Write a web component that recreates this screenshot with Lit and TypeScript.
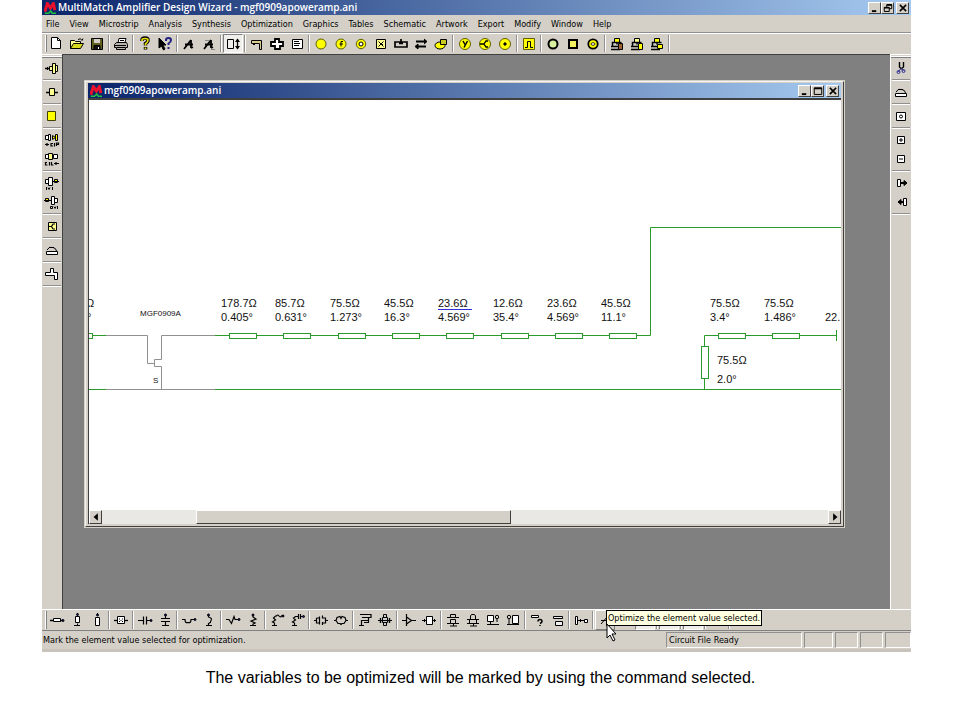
import { LitElement, html, svg, css, nothing } from "lit";
import { customElement, property } from "lit/decorators.js";

const Y = "#ffff00";
const P = "#ffff90";

/* 16 x 16 glyphs, black one-pixel strokes unless a shape says otherwise */
const glyphs: Record<string, unknown> = {
  logo: svg`<path d="M1 13 4.500 2l4 6 4-6 2 9" fill="none" stroke="#e8102c" stroke-width="4"/><path d="M1 15h5l3-3 2 3h5" fill="none" stroke="#20c040" stroke-width="2"/>`,
  new: svg`<path d="M2.500 1.500h6l3 3v8h-9z" fill="#fff"/><path d="M8.500 1.500v3h3"/>`,
  open: svg`<path d="M1.500 12.500v-8h4l1 1h5v3" fill="${P}"/><path d="M1.500 12.500l3-5h10l-3 5z" fill="#d8d820"/><path d="M9 3.500q3-2 4 1l1-2"/>`,
  save: svg`<path d="M2.500 2.500h11v11h-11z" fill="#606020"/><path d="M5 3h6v4H5z" fill="#d4d0c8" stroke="none"/><path d="M5 9.500h6v4H5z" fill="#111"/><path d="M9.500 11v2" stroke="#fff"/>`,
  print: svg`<path d="M5 6.500l1-4h7l-1 4z" fill="#fff"/><path d="M7 4.500h4"/><path d="M1.500 8.500l2-2h10l1 2v3h-2v2h-9v-2h-2z" fill="#b8b4ac"/><path d="M2 9.500h11M4 11.500h8"/>`,
  help: svg`<path d="M5 5V4q0-2 3-2t3 2q0 2-2.500 3.500V9.500M8.500 11v2.500" stroke-width="3.500"/><path d="M5 5V4q0-1.500 3-1.500T11 4q0 2-2.500 4v1.500M8.500 11.500v1.500" stroke="#e8e000" stroke-width="1.700"/>`,
  what: svg`<path d="M2 2v10l2.500-2 2 4 1.500-1-2-4h3z" fill="#000"/><path d="M9 5V4q0-2 2.500-2T14 4q0 2-2.500 3.500V9M11.500 11v2" stroke="#202080" stroke-width="2"/>`,
  a1: svg`<path d="M3 13l7-9M10 4v8M4 8.500h8M10 12l2-1" stroke-width="1.800"/>`,
  a2: svg`<path d="M3 13l7-9M10 4v8M4 8.500h8M10 12l2-1" stroke-width="1.800"/><path d="M4 4.500h4M10 13.500h4" stroke="#888"/>`,
  size: svg`<path d="M2.500 3.500h6v9h-6z"/><path d="M12.500 3v10" stroke-width="1.300"/><path d="M10 6l2.500-3.500L15 6zM10 10l2.500 3.500L15 10z" fill="#000" stroke="none"/>`,
  strip: svg`<path d="M2.500 4.500h10v9h-2v-6h-8z" fill="#d8cc90"/><path d="M4 8.500h2"/>`,
  cross: svg`<path d="M6 3h4v3h4v4h-3v3H6v-3H2V6h4z" fill="#fff" stroke-width="1.800"/>`,
  note: svg`<path d="M3.500 3.500h10v9h-10z" fill="#fff"/><path d="M5 5.500h5M5 7.500h6M5 9.500h5"/>`,
  circ: svg`<circle cx="8" cy="8" r="5" fill="${Y}" stroke="#606000"/>`,
  circf: svg`<circle cx="8" cy="8" r="5" fill="${Y}" stroke="#606000"/><path d="M10 5.500H8v5M6.500 8H10"/>`,
  ring: svg`<circle cx="8" cy="8" r="4.700" fill="${Y}" stroke="#606000"/><circle cx="8" cy="8" r="2" fill="#fff"/>`,
  boxx: svg`<path d="M3.500 3.500h9v9h-9z" fill="${P}"/><path d="M5.500 5.500l5 5M10.500 5.500l-5 5M7 8.500h3"/>`,
  feed: svg`<path d="M2 6h12v5H2zM8 3v5M6 7.500h4" stroke-width="1.700"/>`,
  swap: svg`<path d="M3 5.500h9M4 10.500h9" stroke-width="2"/><path d="M11 3l3 2.500L11 8M5 8l-3 2.500L5 13z" fill="#000"/>`,
  stack: svg`<ellipse cx="7" cy="9.500" rx="5" ry="3.500" fill="${Y}"/><path d="M7.500 3.500h6v5h-6z" fill="#c8c820"/>`,
  cy: svg`<circle cx="8" cy="8" r="5.500" fill="${Y}" stroke="#606000"/><path d="M6 5l2 3.500M10.500 5L7 11.500" stroke-width="1.500"/>`,
  ck: svg`<circle cx="8" cy="8" r="5.500" fill="${Y}" stroke="#606000"/><path d="M3 8h4M11 5H9L7 8l2 3h2" stroke-width="1.300"/>`,
  cdot: svg`<circle cx="8" cy="8" r="5.500" fill="${Y}" stroke="#606000"/><circle cx="8" cy="8" r="1.200" fill="#000"/>`,
  pulse: svg`<path d="M2.500 2.500h11v11h-11z" fill="${Y}" stroke="#606000"/><path d="M4 11.500h2.500v-6h3v6H12"/>`,
  oc: svg`<circle cx="8" cy="8" r="4.500" fill="#d8f0a0" stroke-width="2"/>`,
  os: svg`<path d="M4 4h8v8H4z" fill="#f0f060" stroke-width="2"/>`,
  oe: svg`<circle cx="8" cy="8" r="4.700" fill="${Y}" stroke-width="1.800"/><ellipse cx="8" cy="8" rx="2" ry="1.300" fill="#fff" stroke-width=".8"/>`,
  net1: svg`<path d="M5.500 2.500h5v4h-5z" fill="${Y}"/><path d="M8 6.500v2M3.500 10V6.500h9M2 10.500h7M2 13.500h9" stroke-width="1.500"/><path d="M9.500 7.500h4v6h-4z" fill="#a06030"/>`,
  net2: svg`<path d="M5.500 2.500h5v4h-5z" fill="${P}"/><path d="M8 6.500v2M3.500 10V6.500h9M2 10.500h7M2 13.500h9" stroke-width="1.500"/><path d="M9.500 7.500h4v6h-4z" fill="${Y}"/>`,
  net3: svg`<path d="M5.500 2.500h5v4h-5z" fill="${Y}"/><path d="M8 6.500v2M3.500 10V6.500h9M2 10.500h7M2 13.500h9" stroke-width="1.500"/><path d="M8.500 8.500h5v4h-5z" fill="${Y}"/>`,

  amp: svg`<path d="M1 8.500h4" stroke-width="1.500"/><path d="M5.500 6.500h3v4h-3zM8.500 3.500h3v10h-3zM11.500 5.500h2v6h-2z" fill="${P}"/><path d="M3.500 7v3"/>`,
  blk: svg`<path d="M2 8.500h12" stroke-width="1.500"/><path d="M5.500 4.500h5v7h-5z" fill="${P}"/>`,
  sq: svg`<path d="M3.500 3.500h8v9h-8z" fill="${Y}" stroke="#404000"/>`,
  cir: svg`<path d="M1.500 3.500h3v4h-3zM4.500 2.500h2v6h-2z" fill="#fff"/><path d="M8.500 3.500l3 2-3 2zM11.500 2.500h2v6h-2z" fill="${Y}"/><path d="M1 12.500h4M3 11v3M7 11.500h2M7 11v3h2M10.500 11v3.500M12.500 14v-3h2v1.500h-2" stroke-width="1.200"/>`,
  cil: svg`<path d="M1.500 3.500h3v4h-3zM9.500 3.500h4v4h-4z" fill="#fff"/><path d="M4.500 2.500h4v6h-4z" fill="${P}"/><path d="M1.500 11v3h2M1 11.500h2M5.500 11v3.500M7.500 11v3h2M10 12.500h5M12 11v3" stroke-width="1.200"/>`,
  ivi: svg`<path d="M1.500 4.500h3v4h-3zM4.500 2.500h4v8h-4z" fill="#fff"/><path d="M10.500 4.500h3v3h-3z" fill="${Y}"/><path d="M8 6.500h7M2.500 12v3M4 12.500l1 2 1-2M8.500 12v3"/>`,
  oni: svg`<path d="M1.500 4.500h3v3h-3z" fill="${Y}"/><path d="M7.500 2.500h3v8h-3zM10.500 4.500h3v4h-3z" fill="#fff"/><path d="M0 6.500h7M6.500 12.500h2v2h-2zM10 12.500l1 2 1-2M13.500 12v3"/>`,
  kbox: svg`<path d="M4.500 4.500h8v8h-8z" fill="${P}"/><path d="M4 8.500h3M11 6H9L7.500 8.500 9 11h2" stroke-width="1.200"/>`,
  lid: svg`<path d="M2.500 9.500h11v3h-11z" fill="#fff"/><path d="M3 8q2-4 6-2.500Q12 6 12.500 9M5 5.500h5"/>`,
  plus: svg`<path d="M6.500 2.500h3v4h4v7h-3v-4h-9v-3h5z" fill="#fff"/>`,
  cut: svg`<path d="M6.500 2v5l2 2M10.500 2v5L8 9" stroke-width="1.400"/><path d="M8 8.500L5 12M8 8.500l3 2" stroke="#303090"/><circle cx="5.500" cy="12" r="1.500" stroke="#303090"/><circle cx="10.500" cy="11" r="1.500" stroke="#303090"/>`,
  view: svg`<path d="M3.500 4.500h9v8h-9z" fill="#fff"/><circle cx="8" cy="8.500" r="1.500"/>`,
  zin: svg`<path d="M4.500 4.500h7v7h-7z" fill="#fff"/><path d="M6 8h4M8 6v4"/>`,
  zout: svg`<path d="M4.500 4.500h7v7h-7z" fill="#fff"/><path d="M6 8h4"/>`,
  right: svg`<path d="M4.500 4.500h3v7h-3z" fill="#fff"/><path d="M8 8h5" stroke-width="2"/><path d="M11 5.500L14 8l-3 2.500z" fill="#000"/>`,
  left: svg`<path d="M10.500 4.500h3v7h-3z" fill="#fff"/><path d="M5 8h5" stroke-width="2"/><path d="M8 5.500L5 8l3 2.500z" fill="#000"/>`,

  res: svg`<path d="M1 8.500h3M11 8.500h3" stroke-width="1.300"/><path d="M4.500 6.500h7v3h-7z" fill="#fff"/><circle cx="14" cy="8.500" r="1" fill="#202080"/>`,
  resg: svg`<path d="M8.500 1v3M8.500 11.500v2M5 13.500h6"/><path d="M6.500 4.500h4v6h-4z" fill="#fff"/><circle cx="8.500" cy="2.500" r="1" fill="#202080"/>`,
  reso: svg`<path d="M8.500 1v3"/><path d="M6.500 5.500h4v8h-4z" fill="#fff"/><circle cx="8.500" cy="3" r="1" fill="#202080"/>`,
  quad: svg`<path d="M1 8.500h14" stroke-width="1.300"/><path d="M4.500 4.500h7v7h-7z" fill="#fff"/><path d="M6 7h1M9 7h1M6 9.500h1M9 9.500h1M7.500 8.500h1"/>`,
  cap: svg`<path d="M1 8.500h5M6.500 4.500v8M9.500 4.500v8M10 8.500h5" stroke-width="1.200"/><circle cx="14" cy="8.500" r="1" fill="#202080"/>`,
  capg: svg`<path d="M8.500 2v4M4 6.500h9M4 9.500h9M8.500 10v3M5 13.500h7" stroke-width="1.200"/><circle cx="8.500" cy="3" r="1" fill="#202080"/>`,
  ind: svg`<path d="M1 7.500h3q0 4 3 3 3 1 3-3h4" stroke-width="1.200"/><circle cx="14" cy="7.500" r="1" fill="#202080"/>`,
  indg: svg`<path d="M7.500 2v3q4 1 2.500 3.500 0 2-2.500 3v2M5 13.500h6" stroke-width="1.200"/><circle cx="7.500" cy="3" r="1" fill="#202080"/>`,
  rz: svg`<path d="M1 7.500h3l2.500 4 2.500-7 1 3h4" stroke-width="1.200"/><circle cx="14" cy="7.500" r="1" fill="#202080"/>`,
  rzg: svg`<path d="M8 2v3l3 2-5 2 4 2-2 1v2M5 13.500h6" stroke-width="1.200"/><circle cx="8" cy="3" r="1" fill="#202080"/>`,
  par1: svg`<path d="M3 13.500h5M5.500 13v-2l-2-1 3-2-2-2 2-2h1q1-2 2.500 0 1.500 2 3-.5h2" stroke-width="1.200"/><circle cx="14" cy="4" r="1" fill="#202080"/>`,
  par2: svg`<path d="M3 13.500h5M5.500 13v-2l-2-1 3-2-2-2 2-1.500H9M9.500 2v5M11.500 2v5M12 4.500h3" stroke-width="1.200"/><circle cx="14.500" cy="4.500" r="1" fill="#202080"/>`,
  ser1: svg`<path d="M1 8.500h2M13 8.500h2M3.500 6v5h3M6.500 4.500v8M9.500 3.500v3M9.500 10v3M3.500 6h3M9.500 6h3v5h-3" stroke-width="1.200"/>`,
  ser2: svg`<path d="M1 8.500h2l1-3 3-1 1 2 1-2 3 1 1 3h2M3 8.500l2 3h2l1 1 1-1h2l2-3" stroke-width="1.200"/>`,
  cpl: svg`<path d="M3 2.500h11v3H5M5.500 8.500h6v-3M2 13.500h5M4.500 13V8.500h7v2H7" stroke-width="1.200"/>`,
  trf: svg`<path d="M1 8.500h14M5.500 5.500h5v5h-5zM6.500 2.500h3v3h-3zM6.500 10.500h3v3h-3z" fill="#ccc"/><path d="M3.500 6v5M12.500 6v5" stroke-width="1.400"/>`,
  tri: svg`<path d="M1 8.500h4M5.500 2v12M5.500 5l5 3.500-5 3.500M10 8.500h5" stroke-width="1.200"/>`,
  two: svg`<path d="M1 8.500h14"/><path d="M5.500 4.500h6v8h-6z" fill="#fff"/><path d="M3.500 7v3M13.500 7v3"/>`,
  st1: svg`<path d="M2 5.500h12M2 11.500h12M8.500 11v3M5 14h7"/><path d="M5.500 2.500h5v3h-5zM5.500 7.500h5v4h-5z" fill="#d4d0c8"/>`,
  st2: svg`<path d="M5.500 7v-3l1-1.500h3l1 1.500v3M8.500 11v3M5 14h7"/><path d="M2 7.500h12M2 11.500h12M4.500 7.500h7v4h-7z" fill="#d4d0c8"/>`,
  st3: svg`<path d="M2.500 3.500h6v6h-6z" fill="#fff"/><circle cx="12" cy="5" r="1.700"/><path d="M2 12.500h12M5.500 10v2M12 7v3"/>`,
  st4: svg`<path d="M7.500 3.500h6v8h-6z" fill="#fff"/><circle cx="4" cy="5" r="1.700"/><path d="M2 12.500h12M4 7v5"/>`,
  ask: svg`<path d="M2.500 3.500h7v2h-7z" fill="#fff"/><path d="M9 9.500q0-2 2-2t2 2q0 1-2 2M11 13v1" stroke-width="1.500"/>`,
  stp: svg`<path d="M4.500 4.500h9v2h-9zM6.500 9.500h7v4h-7z" fill="#eee"/>`,
  link: svg`<path d="M2.500 4.500h2v8h-2zM5 8.500h6M11.500 7.500h3v3h-3z" fill="#fff"/><path d="M7.500 7v3"/>`,
  opt: svg`<path d="M4 12l7-8M11 4v8M4 8.500h9"/>`,
  tune: svg`<path d="M6 12.500h5M8 12v2"/>`,

  min: svg`<path d="M3 13h7" stroke-width="3"/>`,
  max: svg`<path d="M2 3h12v10.500H2z" stroke-width="1.600"/><path d="M2 4h12" stroke-width="2.500"/>`,
  restore: svg`<path d="M6 7V3h8v6h-4M2 7h8v6.500H2z" stroke-width="1.600"/><path d="M6 3h8M2 7.500h8" stroke-width="2.500"/>`,
  close: svg`<path d="M3 3l10 10M13 3L3 13" stroke-width="2.500"/>`,
  sl: svg`<path d="M11 2v12L4 8z" fill="#000" stroke="none"/>`,
  sr: svg`<path d="M5 2v12l7-6z" fill="#000" stroke="none"/>`,
};

const icon = (name: string) =>
  html`<svg class="icon" viewBox="0 0 16 16" aria-hidden="true" fill="none" stroke="#000">${glyphs[name]}</svg>`;

const base = css`
  * { box-sizing: border-box; }
  button { font: inherit; color: inherit; margin: 0; padding: 0; border: 0; background: none; }
  .icon { display: block; width: 16px; height: 16px; flex: none; }
`;

@customElement("tool-strip")
class ToolStrip extends LitElement {
  @property({ attribute: false }) groups: string[][] = [];
  @property({ type: Boolean, reflect: true }) vertical = false;
  @property() pressed = "";
  @property() hot = "";

  static styles = [base, css`
    :host { display: flex; align-items: stretch; background: #d4d0c8; padding-left: 3px; border-top: 1px solid #fff; border-bottom: 1px solid #808080; }
    .grip { width: 2px; flex: none; border-right: 1px solid #808080; border-left: 1px solid #fff; margin: 1px 0; }
    .group { display: flex; }
    .tool { width: 20px; display: grid; place-items: center; }
    .sep { width: 4px; flex: none; background: linear-gradient(90deg, transparent 1px, #909090 1px 2px, #fff 2px 3px, transparent 3px); margin: 1px 0; }
    .pressed { background: #f0eeea; border: 1px solid #808080; border-right-color: #fff; border-bottom-color: #fff; }
    .hot { border: 1px solid #fff; border-right-color: #808080; border-bottom-color: #808080; }
    :host([vertical]) { flex-direction: column; padding: 1px 0 0; border-top: 1px solid #fff; border-bottom: 0; }
    :host([vertical]) .grip { width: auto; height: 2px; border: 0; border-top: 1px solid #fff; border-bottom: 1px solid #808080; margin: 0; }
    :host([vertical]) .group { flex-direction: column; align-items: center; }
    :host([vertical]) .tool { height: 19px; }
    :host([vertical]) .sep { width: auto; height: 5px; margin: 0 1px; background: linear-gradient(transparent 2px, #909090 2px 3px, #fff 3px 4px, transparent 4px); }
  `];

  render() {
    return html`<span class="grip"></span>${this.groups.map((g) => html`
      <div class="group">${g.map((n) => html`
        <button class="tool ${n === this.pressed ? "pressed" : ""} ${n === this.hot ? "hot" : ""}" aria-label=${n || "tool"}>
          ${n ? icon(n) : nothing}
        </button>`)}</div>
      <span class="sep"></span>`)}`;
  }
}

@customElement("circuit-view")
class CircuitView extends LitElement {
  static styles = css`
    :host { display: block; flex: 1; min-height: 0; background: #fff; overflow: hidden; }
    .sheet { display: block; width: 100%; height: 100%; }
    .wire { stroke: #2a9a2a; fill: none; }
    .part { stroke: #2a9a2a; fill: #fff; }
    .device { stroke: #909090; fill: none; }
    .mark { stroke: #3030d8; fill: none; }
    .value { font: 11px "Liberation Sans", Arial, sans-serif; fill: #111; }
    .name { font: 8px "Liberation Sans", Arial, sans-serif; fill: #111; }
  `;

  private lines: [number, string, string][] = [
    [132, "178.7Ω", "0.405°"], [186, "85.7Ω", "0.631°"], [241, "75.5Ω", "1.273°"], [295, "45.5Ω", "16.3°"],
    [349, "23.6Ω", "4.569°"], [404, "12.6Ω", "35.4°"], [458, "23.6Ω", "4.569°"], [512, "45.5Ω", "11.1°"],
    [621, "75.5Ω", "3.4°"], [675, "75.5Ω", "1.486°"],
  ];

  render() {
    return html`<svg class="sheet" role="img" aria-label="Amplifier circuit">
      <path class="device" d="M17 235.500H58.500V263.500H65.500M72.500 289V266.500H65.500V259.500H72.500V235.500H126M17 289.500H126"/>
      <path class="wire" d="M0 235.500H17M0 289.500H17M126 289.500H2000M126 235.500H561.500V127.500H2000M615.500 289V235.500H747M747.500 230V241"/>
      <rect class="part" x="-22.500" y="233.500" width="26" height="5"/>
      ${this.lines.map(([x, z, len]) => svg`
        <rect class="part" x=${x + 8.5} y="233.500" width="27" height="5"/>
        <text class="value" x=${x} y="207">${z}</text>
        <text class="value" x=${x} y="221">${len}</text>`)}
      <path class="mark" d="M349 209.500h34"/>
      <rect class="part" x="612.500" y="246.500" width="7" height="32"/>
      <text class="value" x="628" y="264">75.5Ω</text>
      <text class="value" x="628" y="283">2.0°</text>
      <text class="value" x="736" y="221">22.</text>
      <text class="value" x="-3" y="207">Ω</text>
      <text class="value" x="-2" y="221">°</text>
      <text class="name" x="51" y="216">MGF0909A</text>
      <text class="name" x="64" y="283">S</text>
    </svg>`;
  }
}

@customElement("app-root")
class AppRoot extends LitElement {
  static styles = [base, css`
    :host { display: flex; flex-direction: column; min-height: 100vh; background: #fff; color: #000; font: 9px/12px "DejaVu Sans Condensed", "DejaVu Sans", sans-serif; }
    .frame { flex: 1; display: flex; flex-direction: column; margin: 0 49px 0 42px; background: #d4d0c8; }
    .title { display: flex; align-items: center; gap: 2px; height: 15px; flex: none; padding: 0 2px 0 2px; color: #fff; background: linear-gradient(90deg, #0a246a, #a6caf0); }
    .title .icon { width: 12px; height: 12px; }
    .caption { flex: 1; font: 600 10px/15px "Open Sans", "Noto Sans", sans-serif; white-space: nowrap; }
    .ctl { width: 13px; height: 12px; display: grid; place-items: center; background: #d4d0c8; border: 1px solid #fff; border-right-color: #404040; border-bottom-color: #404040; }
    .ctl .icon { width: 10px; height: 10px; }
    .ctls { display: flex; }
    .ctls .ctl:last-child { margin-left: 2px; }
    .menu { display: flex; gap: 10px; height: 18px; flex: none; padding: 0 4px; align-items: center; border-bottom: 1px solid #909090; }
    .main { height: 21px; flex: none; border-bottom-color: #d4d0c8; }
    .body { flex: 1; display: flex; min-height: 0; }
    .side { width: 20px; flex: none; }
    .right { width: 21px; border-left: 1px solid #fff; }
    .desk { flex: 1; min-width: 0; display: flex; background: #808080; border: 1px solid #404040; border-width: 1px 0 0 1px; padding: 26px 46px 82px 22px; }
    .child { flex: 1; min-width: 0; display: flex; flex-direction: column; background: #d4d0c8; border: 1px solid #f4f4f0; border-right-color: #404040; border-bottom-color: #404040; box-shadow: 0 0 0 1px #d4d0c8; padding: 1px 2px 2px; }
    .client { flex: 1; min-height: 0; display: flex; flex-direction: column; border: 1px solid #404040; border-width: 2px 0 0 1px; }
    .scroll { display: flex; height: 14px; flex: none; background: #eae8e4; }
    .track { flex: 1; display: grid; grid-template-columns: 94fr 314fr 316fr; }
    .thumb { grid-column: 2; background: #d4d0c8; border: 1px solid #fff; border-right-color: #404040; border-bottom-color: #404040; }
    .scroll .ctl { height: 14px; }
    .bottom { position: relative; display: flex; flex: none; height: 22px; }
    .tools { flex: 1; }
    .tip { position: absolute; left: 564px; top: 1px; height: 16px; padding: 0 1px; background: #ffffe1; border: 1px solid #000; line-height: 14px; white-space: nowrap; }
    .pointer { position: absolute; left: 564px; top: 14px; width: 12px; height: 20px; z-index: 1; }
    .status { display: flex; gap: 2px; height: 21px; flex: none; padding: 1px 0 1px 1px; border-bottom: 3px solid #c8c4bc; line-height: 16px; }
    .msg { flex: 1; }
    .pane { border: 1px solid #909090; border-right-color: #fff; border-bottom-color: #fff; padding-left: 2px; line-height: 14px; }
    .wide { width: 136px; }
    .p1 { width: 29px; }
    .p2 { width: 23px; }
    .p3 { width: 26px; }
    .note { flex: none; height: 68px; margin: 0; padding: 16px 0 0 1px; text-align: center; font: 16px/20px "Liberation Sans", Arial, sans-serif; }
  `];

  private menus = ["File", "View", "Microstrip", "Analysis", "Synthesis", "Optimization", "Graphics", "Tables", "Schematic", "Artwork", "Export", "Modify", "Window", "Help"];
  private main = [["new", "open", "save"], ["print"], ["help", "what"], ["a1", "a2"], ["size"], ["strip", "cross", "note"],
    ["circ", "circf", "ring", "boxx", "feed", "swap", "stack"], ["cy", "ck", "cdot"], ["pulse"], ["oc", "os", "oe"], ["net1", "net2", "net3"]];
  private leftTools = [["amp"], ["blk"], ["sq"], ["cir", "cil"], ["ivi", "oni"], ["kbox"], ["lid"], ["plus"]];
  private rightTools = [["cut"], ["lid"], ["view"], ["zin", "zout"], ["right", "left"]];
  private parts = [["res", "resg", "reso"], ["quad"], ["cap", "capg"], ["ind", "indg"], ["rz", "rzg"], ["par1", "par2"], ["ser1", "ser2"],
    ["cpl", "trf"], ["tri", "two"], ["st1", "st2", "st3", "st4"], ["ask", "stp"], ["link"], ["opt", "tune", ""], [""], [""], ["tune"]];

  private controls(middle: string) {
    return html`<div class="ctls">
      <button class="ctl" aria-label="Minimize">${icon("min")}</button>
      <button class="ctl" aria-label="Resize">${icon(middle)}</button>
      <button class="ctl" aria-label="Close">${icon("close")}</button>
    </div>`;
  }

  render() {
    return html`
      <div class="frame">
        <header class="title">${icon("logo")}<span class="caption">MultiMatch Amplifier Design Wizard - mgf0909apoweramp.ani</span>${this.controls("restore")}</header>
        <nav class="menu">${this.menus.map((m) => html`<button>${m}</button>`)}</nav>
        <tool-strip class="main" .groups=${this.main} pressed="size"></tool-strip>
        <div class="body">
          <tool-strip class="side" vertical .groups=${this.leftTools}></tool-strip>
          <main class="desk">
            <section class="child">
              <div class="title">${icon("logo")}<span class="caption">mgf0909apoweramp.ani</span>${this.controls("max")}</div>
              <div class="client">
                <circuit-view></circuit-view>
                <div class="scroll">
                  <button class="ctl" aria-label="Scroll left">${icon("sl")}</button>
                  <div class="track"><div class="thumb"></div></div>
                  <button class="ctl" aria-label="Scroll right">${icon("sr")}</button>
                </div>
              </div>
            </section>
          </main>
          <tool-strip class="side right" vertical .groups=${this.rightTools}></tool-strip>
        </div>
        <div class="bottom">
          <tool-strip class="tools" .groups=${this.parts} hot="opt"></tool-strip>
          <div class="tip" role="tooltip">Optimize the element value selected.</div>
          <svg class="pointer" viewBox="0 0 12 20" aria-hidden="true"><path d="M1 1v14l3-3 3 6 2-1-3-6h4z" fill="#fff" stroke="#000"/></svg>
        </div>
        <footer class="status">
          <span class="msg">Mark the element value selected for optimization.</span>
          <span class="pane wide">Circuit File Ready</span>
          <span class="pane p1"></span><span class="pane p2"></span><span class="pane p2"></span><span class="pane p3"></span>
        </footer>
      </div>
      <p class="note">The variables to be optimized will be marked by using the command selected.</p>`;
  }
}
